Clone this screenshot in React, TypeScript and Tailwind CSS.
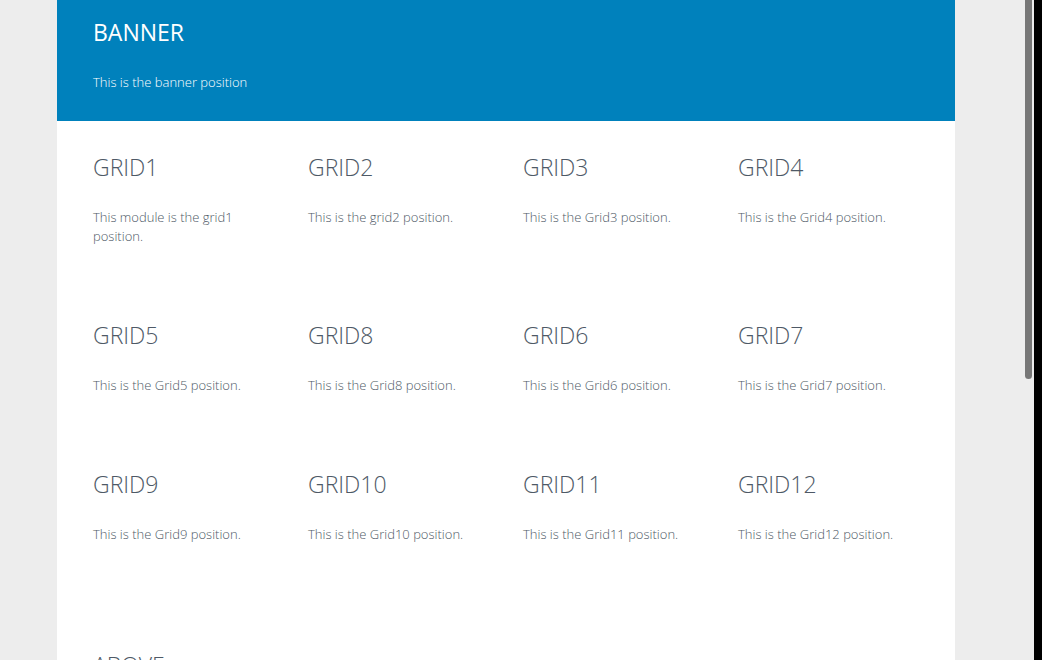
import React from "react";

const rows: { title: string; text: string }[][] = [
  [
    { title: "GRID1", text: "This module is the grid1 position." },
    { title: "GRID2", text: "This is the grid2 position." },
    { title: "GRID3", text: "This is the Grid3 position." },
    { title: "GRID4", text: "This is the Grid4 position." },
  ],
  [
    { title: "GRID5", text: "This is the Grid5 position." },
    { title: "GRID8", text: "This is the Grid8 position." },
    { title: "GRID6", text: "This is the Grid6 position." },
    { title: "GRID7", text: "This is the Grid7 position." },
  ],
  [
    { title: "GRID9", text: "This is the Grid9 position." },
    { title: "GRID10", text: "This is the Grid10 position." },
    { title: "GRID11", text: "This is the Grid11 position." },
    { title: "GRID12", text: "This is the Grid12 position." },
  ],
];

export default function App() {
  return (
    <div className="relative h-[660px] w-[1042px] overflow-hidden bg-[#ededed] font-['Open_Sans','Liberation_Sans',sans-serif]">
      <div className="ml-[57px] min-h-[660px] w-[898px] bg-white">
        <div className="bg-[#0081bc] px-[36px] pb-[29px] pt-[20px] text-white">
          <h2 className="text-[23px] font-normal leading-[24px]">BANNER</h2>
          <p className="mt-[29px] text-[13px] font-light leading-[19px]">This is the banner position</p>
        </div>
        <div className="px-[18px] pt-[34px]">
          {rows.map((row, i) => (
            <div key={i} className="mb-[77px] grid grid-cols-[repeat(4,215px)]">
              {row.map((m) => (
                <div key={m.title} className="px-[18px] text-[#4e5966]">
                  <h3 className="text-[23px] font-light leading-[24px]">{m.title}</h3>
                  <p className="mt-[29px] text-[13px] font-light leading-[19px]">{m.text}</p>
                </div>
              ))}
            </div>
          ))}
          <div className="mt-[109px] px-[18px] text-[#4e5966]">
            <h3 className="text-[23px] font-light leading-[24px]">ABOVE</h3>
          </div>
        </div>
      </div>
      <div className="absolute right-0 top-0 h-full w-[8px] bg-black" />
      <div className="absolute left-[1025px] top-0 h-[379px] w-[7px] rounded-b-full bg-[#777777]" />
    </div>
  );
}
